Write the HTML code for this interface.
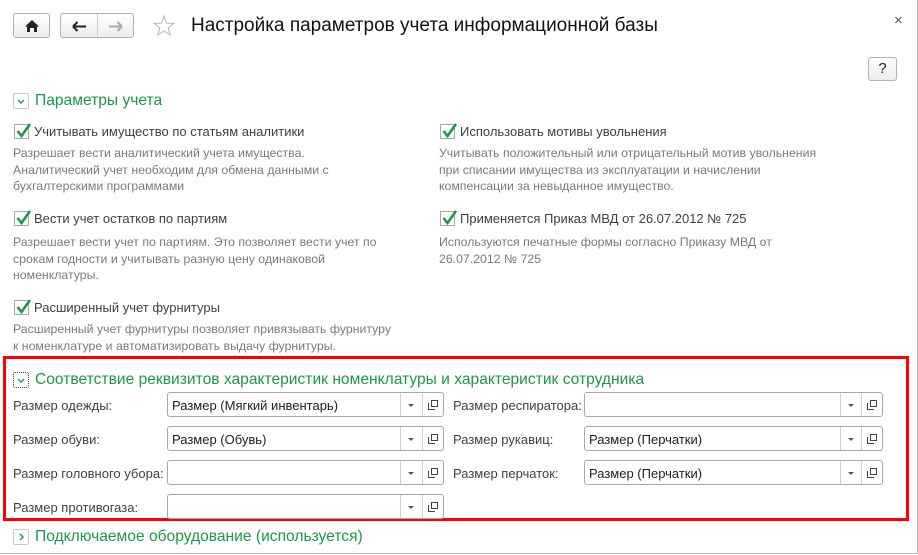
<!DOCTYPE html>
<html><head><meta charset="utf-8"><style>
*{margin:0;padding:0;box-sizing:border-box}
body{width:918px;height:555px;position:relative;background:#fff;font-family:"Liberation Sans",Arial,sans-serif;overflow:hidden;color:#404040}
.a{position:absolute;white-space:nowrap}
.frame{position:absolute;left:0;top:0;width:918px;height:554px;border:1px solid #b8b8b8;border-top:none;border-left:none}
.btn{position:absolute;border:1px solid #b3b3b3;border-radius:3px;background:linear-gradient(#fff,#ececec)}
.chev{position:absolute;width:16px;height:16px;border:1px solid #c8c8c8;border-radius:2px;background:#fff}
.sec{position:absolute;font-size:15.6px;color:#1a9a48;white-space:nowrap}
.lbl{position:absolute;font-size:13px;color:#404040;white-space:nowrap}
.desc{position:absolute;font-size:12.3px;color:#7a7a7a;line-height:16.5px;white-space:nowrap}
.cb{position:absolute;width:15px;height:15px;border:1px solid #a8a8a8;background:#fff}
.cb svg{position:absolute;left:0;top:-3px}
.fld{position:absolute;height:25px;border:1px solid #a8a8a8;border-radius:3px;background:#fff;font-size:13px;color:#202020;padding:5px 0 0 4px}
.fld .s1{position:absolute;top:0;bottom:0;border-left:1px solid #d0d0d0}
.fld .arr{position:absolute;top:11px;width:0;height:0;border-left:3px solid transparent;border-right:3px solid transparent;border-top:3px solid #555}
.fld .op{position:absolute;top:7px;width:11px;height:11px}
</style></head><body>
<div class="frame"></div>
<div class="btn" style="left:13px;top:13px;width:37px;height:25px">
<svg width="37" height="25" style="position:absolute;left:0;top:0"><path d="M11 12.5 L18 6 L25 12.5 H23 V18 H20 V14 H16 V18 H13 V12.5Z" fill="#222"/></svg></div>
<div class="btn" style="left:60px;top:13px;width:74px;height:25px">
<div style="position:absolute;left:36px;top:0;bottom:0;border-left:1px solid #ccc"></div>
<svg width="74" height="25" style="position:absolute;left:0;top:0"><path d="M12 12.5 H25 M12 12.5 L16.5 8 M12 12.5 L16.5 17" stroke="#222" stroke-width="2" fill="none"/><path d="M48 12.5 H61 M61 12.5 L56.5 8 M61 12.5 L56.5 17" stroke="#aaa" stroke-width="2" fill="none"/></svg></div>
<svg class="a" style="left:152px;top:14px" width="24" height="24"><path d="M12 2 L14.6 9.2 L22 9.3 L16.1 13.9 L18.3 21 L12 16.8 L5.7 21 L7.9 13.9 L2 9.3 L9.4 9.2Z" fill="none" stroke="#b0b0b0" stroke-width="0.9"/></svg>
<div class="a" style="left:191px;top:15px;font-size:19px;color:#111">Настройка параметров учета информационной базы</div>
<div class="a" style="left:894px;top:12px;font-size:15px;color:#555">×</div>
<div class="btn" style="left:868px;top:57px;width:29px;height:24px;font-size:15px;color:#222;text-align:center;line-height:22px">?</div>

<div class="chev" style="left:13px;top:93px"><svg width="14" height="14"><path d="M4 6 L7 9 L10 6" stroke="#1a9a48" stroke-width="1.4" fill="none"/></svg></div>
<div class="sec" style="left:35px;top:92px">Параметры учета</div>

<div class="cb" style="left:14px;top:124px"><svg width="18" height="18"><path d="M2.5 9 L6.5 14 L15 2" stroke="#1a9a48" stroke-width="2.6" fill="none"/></svg></div>
<div class="lbl" style="left:34px;top:124px">Учитывать имущество по статьям аналитики</div>
<div class="desc" style="left:13px;top:145px">Разрешает вести аналитический учета имущества.<br>Аналитический учет необходим для обмена данными с<br>бухгалтерскими программами</div>

<div class="cb" style="left:440px;top:124px"><svg width="18" height="18"><path d="M2.5 9 L6.5 14 L15 2" stroke="#1a9a48" stroke-width="2.6" fill="none"/></svg></div>
<div class="lbl" style="left:460px;top:124px">Использовать мотивы увольнения</div>
<div class="desc" style="left:439px;top:145px">Учитывать положительный или отрицательный мотив увольнения<br>при списании имущества из эксплуатации и начислении<br>компенсации за невыданное имущество.</div>

<div class="cb" style="left:14px;top:211px"><svg width="18" height="18"><path d="M2.5 9 L6.5 14 L15 2" stroke="#1a9a48" stroke-width="2.6" fill="none"/></svg></div>
<div class="lbl" style="left:34px;top:211px">Вести учет остатков по партиям</div>
<div class="desc" style="left:13px;top:234px">Разрешает вести учет по партиям. Это позволяет вести учет по<br>срокам годности и учитывать разную цену одинаковой<br>номенклатуры.</div>

<div class="cb" style="left:440px;top:211px"><svg width="18" height="18"><path d="M2.5 9 L6.5 14 L15 2" stroke="#1a9a48" stroke-width="2.6" fill="none"/></svg></div>
<div class="lbl" style="left:460px;top:211px">Применяется Приказ МВД от 26.07.2012 № 725</div>
<div class="desc" style="left:439px;top:234px">Используются печатные формы согласно Приказу МВД от<br>26.07.2012 № 725</div>

<div class="cb" style="left:14px;top:300px"><svg width="18" height="18"><path d="M2.5 9 L6.5 14 L15 2" stroke="#1a9a48" stroke-width="2.6" fill="none"/></svg></div>
<div class="lbl" style="left:34px;top:300px">Расширенный учет фурнитуры</div>
<div class="desc" style="left:13px;top:321px">Расширенный учет фурнитуры позволяет привязывать фурнитуру<br>к номенклатуре и автоматизировать выдачу фурнитуры.</div>

<div class="a" style="left:3px;top:356px;width:906px;height:165px;border:3px solid #f00"></div>
<div class="chev" style="left:13px;top:372px;border:1px dotted #444"><svg width="14" height="14"><path d="M4 6 L7 9 L10 6" stroke="#1a9a48" stroke-width="1.4" fill="none"/></svg></div>
<div class="sec" style="left:35px;top:371px">Соответствие реквизитов характеристик номенклатуры и характеристик сотрудника</div>

<div class="lbl" style="left:13px;top:398px">Размер одежды:</div>
<div class="fld" style="left:167px;top:392px;width:277px">Размер (Мягкий инвентарь)<div class="s1" style="left:232px"></div><div class="arr" style="left:240px"></div><div class="s1" style="left:254px"></div><svg class="op" style="left:260px" width="11" height="11"><rect x="3.5" y="0.5" width="6" height="6" fill="none" stroke="#444"/><path d="M0.5 3 V9.5 H7" fill="none" stroke="#444"/></svg></div>
<div class="lbl" style="left:13px;top:432px">Размер обуви:</div>
<div class="fld" style="left:167px;top:426px;width:277px">Размер (Обувь)<div class="s1" style="left:232px"></div><div class="arr" style="left:240px"></div><div class="s1" style="left:254px"></div><svg class="op" style="left:260px" width="11" height="11"><rect x="3.5" y="0.5" width="6" height="6" fill="none" stroke="#444"/><path d="M0.5 3 V9.5 H7" fill="none" stroke="#444"/></svg></div>
<div class="lbl" style="left:13px;top:466px">Размер головного убора:</div>
<div class="fld" style="left:167px;top:460px;width:277px"><div class="s1" style="left:232px"></div><div class="arr" style="left:240px"></div><div class="s1" style="left:254px"></div><svg class="op" style="left:260px" width="11" height="11"><rect x="3.5" y="0.5" width="6" height="6" fill="none" stroke="#444"/><path d="M0.5 3 V9.5 H7" fill="none" stroke="#444"/></svg></div>
<div class="lbl" style="left:13px;top:500px">Размер противогаза:</div>
<div class="fld" style="left:167px;top:494px;width:277px"><div class="s1" style="left:232px"></div><div class="arr" style="left:240px"></div><div class="s1" style="left:254px"></div><svg class="op" style="left:260px" width="11" height="11"><rect x="3.5" y="0.5" width="6" height="6" fill="none" stroke="#444"/><path d="M0.5 3 V9.5 H7" fill="none" stroke="#444"/></svg></div>

<div class="lbl" style="left:453px;top:398px">Размер респиратора:</div>
<div class="fld" style="left:584px;top:392px;width:299px"><div class="s1" style="left:255px"></div><div class="arr" style="left:263px"></div><div class="s1" style="left:276px"></div><svg class="op" style="left:282px" width="11" height="11"><rect x="3.5" y="0.5" width="6" height="6" fill="none" stroke="#444"/><path d="M0.5 3 V9.5 H7" fill="none" stroke="#444"/></svg></div>
<div class="lbl" style="left:453px;top:432px">Размер рукавиц:</div>
<div class="fld" style="left:584px;top:426px;width:299px">Размер (Перчатки)<div class="s1" style="left:255px"></div><div class="arr" style="left:263px"></div><div class="s1" style="left:276px"></div><svg class="op" style="left:282px" width="11" height="11"><rect x="3.5" y="0.5" width="6" height="6" fill="none" stroke="#444"/><path d="M0.5 3 V9.5 H7" fill="none" stroke="#444"/></svg></div>
<div class="lbl" style="left:453px;top:466px">Размер перчаток:</div>
<div class="fld" style="left:584px;top:460px;width:299px">Размер (Перчатки)<div class="s1" style="left:255px"></div><div class="arr" style="left:263px"></div><div class="s1" style="left:276px"></div><svg class="op" style="left:282px" width="11" height="11"><rect x="3.5" y="0.5" width="6" height="6" fill="none" stroke="#444"/><path d="M0.5 3 V9.5 H7" fill="none" stroke="#444"/></svg></div>

<div class="chev" style="left:13px;top:529px"><svg width="14" height="14"><path d="M6 4 L9 7 L6 10" stroke="#1a9a48" stroke-width="1.4" fill="none"/></svg></div>
<div class="sec" style="left:35px;top:528px">Подключаемое оборудование (используется)</div>
</body></html>
